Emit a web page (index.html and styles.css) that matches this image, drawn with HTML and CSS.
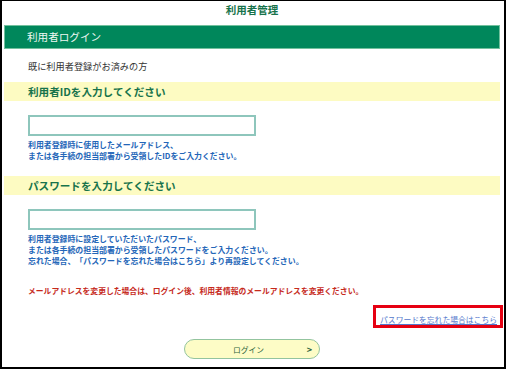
FILE: index.html
```html
<!DOCTYPE html>
<html lang="ja">
<head>
  <meta charset="UTF-8">
  <meta name="viewport" content="width=device-width, initial-scale=1.0">
  <title>利用者管理 - 利用者ログイン</title>
  <link rel="stylesheet" href="styles.css">
</head>
<body>
  <div class="frame">
    <div class="title">利用者管理</div>
    <div class="bar-green">利用者ログイン</div>
    <p class="lead">既に利用者登録がお済みの方</p>

    <div class="bar-yellow">利用者IDを入力してください</div>
    <div class="field"><input type="text" class="text-input"></div>
    <p class="help">利用者登録時に使用したメールアドレス、<br>または各手続の担当部署から受領したIDをご入力ください。</p>

    <div class="bar-yellow second">パスワードを入力してください</div>
    <div class="field"><input type="password" class="text-input"></div>
    <p class="help">利用者登録時に設定していただいたパスワード、<br>または各手続の担当部署から受領したパスワードをご入力ください。<br>忘れた場合、「パスワードを忘れた場合はこちら」より再設定してください。</p>

    <p class="notice">メールアドレスを変更した場合は、ログイン後、利用者情報のメールアドレスを変更ください。</p>

    <div class="link-row">
      <div class="link-box"><a href="#">パスワードを忘れた場合はこちら</a></div>
    </div>

    <div class="button-row">
      <button class="login-btn"><span></span><span class="btn-label">ログイン</span><span class="btn-arrow">&gt;</span></button>
    </div>
  </div>
</body>
</html>
```

FILE: styles.css
```css
body {
  margin: 0;
  background: #fff;
  font-family: 'Noto Sans CJK JP', 'Noto Sans', sans-serif;
}
.frame {
  height: 369px;
  box-sizing: border-box;
  border: 2px solid #000;
  border-top-width: 1px;
  padding: 0 1px 0 2px;
}
.title {
  height: 17px;
  line-height: 17px;
  margin-right: 3px;
  text-align: center;
  font-size: 10.5px;
  font-weight: bold;
  color: #17734b;
  margin-bottom: 7px;
}
.bar-green {
  height: 24px;
  box-sizing: border-box;
  line-height: 22px;
  margin-right: 3px;
  padding-left: 22px;
  background: #00875b;
  border: 1px solid #72c09d;
  color: #eef8f2;
  font-size: 10.6px;
}
.lead {
  margin: 8px 0 7px 24px;
  line-height: 18px;
  font-size: 9.2px;
  color: #333;
}
.bar-yellow {
  height: 19px;
  line-height: 19px;
  margin-right: 3px;
  padding-left: 24px;
  background: #fdfbc2;
  color: #17734b;
  font-size: 10.6px;
  font-weight: bold;
}
.bar-yellow.second {
  margin-top: 15px;
}
.field {
  margin: 10px 0 0 24px;
  height: 21px;
}
.text-input {
  width: 228px;
  height: 21px;
  box-sizing: border-box;
  border: 2px solid #8ec6bc;
  margin: 0;
  padding: 0 4px;
  background: #fff;
}
.help {
  margin: 7px 0 0 24px;
  line-height: 11px;
  font-size: 7.9px;
  font-weight: bold;
  color: #2466b8;
}
.notice {
  margin: 19px 0 0 24px;
  line-height: 11px;
  font-size: 7.8px;
  font-weight: bold;
  color: #c62a1c;
}
.link-row {
  display: flex;
  justify-content: flex-end;
  margin-top: 9px;
}
.link-box {
  height: 23px;
  box-sizing: border-box;
  border: 3px solid #e60012;
  padding: 0 3px 0 4px;
  line-height: 17px;
}
.link-box a {
  font-size: 7.8px;
  color: #5577cc;
  text-decoration: underline;
}
.button-row {
  display: flex;
  justify-content: center;
  margin: 11px 3px 0 0;
}
.login-btn {
  width: 136px;
  height: 20px;
  box-sizing: border-box;
  display: grid;
  grid-template-columns: 1fr auto 1fr;
  align-items: center;
  padding: 0 7px 0 0;
  border: 1.5px solid #93c49e;
  border-radius: 10px;
  background: #fdfcc6;
  font-family: inherit;
  color: #2f6540;
}
.btn-label {
  font-size: 7.8px;
}
.btn-arrow {
  justify-self: end;
  font-size: 9px;
  font-weight: bold;
}
```
